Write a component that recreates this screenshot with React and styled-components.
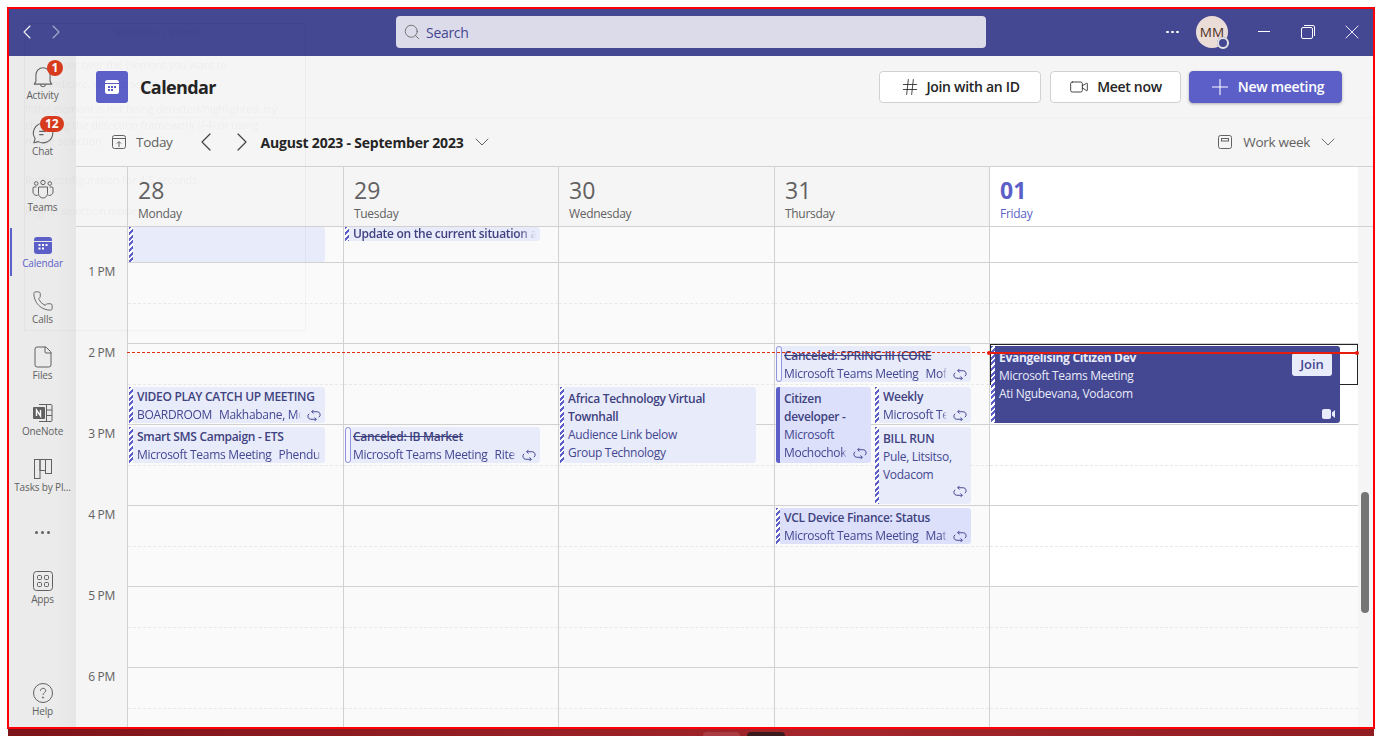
import styled, { createGlobalStyle } from "styled-components";
import { ChevronLeft, ChevronRight, ChevronDown, Search, Plus, Hash, Video, X, Phone, File } from "lucide-react";

const BRAND = "#5b5fc7";
const BRAND_DARK = "#444791";
const COLUMNS = "216px 215px 216px 215px 1fr";

const GlobalStyle = createGlobalStyle`
  html, body {
    margin: 0;
    height: 100%;
    background: #fff;
    overflow: hidden;
  }
  body {
    font-family: "Open Sans", "Liberation Sans", sans-serif;
    letter-spacing: -0.3px;
    color: #242424;
  }
  * { box-sizing: border-box; }
`;

const Page = styled.div`
  width: 1382px;
  height: 736px;
  padding-top: 7px;
`;

const Frame = styled.div`
  position: relative;
  width: 1368px;
  height: 722px;
  margin-left: 7px;
  border: 2px solid #fb0007;
  display: flex;
  flex-direction: column;
  overflow: hidden;
`;

const Wallpaper = styled.div`
  height: 7px;
  margin-left: 8px;
  width: 1366px;
  background: linear-gradient(90deg, #7d1419, #a3262b 60%, #8f1d22);
  display: flex;
  align-items: flex-end;
  gap: 7px;
  padding-left: 695px;
`;

const TrayButton = styled.div`
  width: ${(p) => p.$w}px;
  height: 4px;
  border-radius: 4px 4px 0 0;
  background: ${(p) => p.$bg};
`;

/* title bar */
const TitleBar = styled.header`
  height: 47px;
  flex: none;
  padding-bottom: 1px;
  background: ${BRAND_DARK};
  display: flex;
  align-items: center;
  color: #fff;
  position: relative;
`;

const HistoryNav = styled.div`
  width: 387px;
  padding-left: 9px;
  display: flex;
  gap: 11px;
`;

const NavArrow = styled.span`
  width: 18px;
  height: 18px;
  display: flex;
  align-items: center;
  justify-content: center;
  opacity: ${(p) => (p.$dim ? 0.55 : 0.95)};
  svg { flex: none; }
`;

const SearchBox = styled.div`
  width: 590px;
  height: 32px;
  background: #dcdbe9;
  border-radius: 4px;
  display: flex;
  align-items: center;
  gap: 5px;
  padding-left: 7px;
  font-size: 14px;
  color: ${BRAND_DARK};
  svg { color: #616161; }
`;

const TitleRight = styled.div`
  margin-left: auto;
  margin-right: -1px;
  display: flex;
  align-items: center;
  height: 100%;
`;

const MoreDots = styled.div`
  display: flex;
  gap: 2px;
  margin-right: 17px;
  span {
    width: 3px;
    height: 2px;
    background: #fff;
    border-radius: 1px;
  }
`;

const Avatar = styled.div`
  position: relative;
  width: 32px;
  height: 32px;
  border-radius: 50%;
  background: #eaddd7;
  color: #4f2f26;
  font-size: 13.5px;
  letter-spacing: 0;
  display: flex;
  align-items: center;
  justify-content: center;
  margin-right: 14px;
`;

const StatusBadge = styled.span`
  position: absolute;
  right: -1px;
  bottom: -1px;
  width: 12px;
  height: 12px;
  border-radius: 50%;
  background: ${BRAND_DARK};
  display: flex;
  align-items: center;
  justify-content: center;
  &::after {
    content: "";
    width: 8px;
    height: 8px;
    border-radius: 50%;
    border: 2.5px solid #e4e4e4;
    background: ${BRAND_DARK};
  }
`;

const WindowButton = styled.span`
  width: 44px;
  height: 100%;
  display: flex;
  align-items: center;
  justify-content: center;
`;

/* sidebar */
const Body = styled.div`
  flex: 1;
  display: flex;
  min-height: 0;
`;

const Sidebar = styled.nav`
  width: 67px;
  flex: none;
  background: linear-gradient(90deg, #ebebeb 70%, #e6e6e6);
  display: flex;
  flex-direction: column;
  gap: 8px;
  padding: 4px 0 3px;
`;

const NavItem = styled.div`
  position: relative;
  height: 48px;
  flex: none;
  display: flex;
  flex-direction: column;
  align-items: center;
  padding-top: 6px;
  font-size: 10px;
  letter-spacing: -0.15px;
  line-height: 13px;
  color: ${(p) => (p.$active ? BRAND : "#616161")};
  margin-top: ${(p) => (p.$push ? "auto" : 0)};
  white-space: nowrap;
  &::before {
    content: "";
    display: ${(p) => (p.$active ? "block" : "none")};
    position: absolute;
    left: 1px;
    top: 0;
    bottom: 0;
    width: 2px;
    background: ${BRAND};
  }
`;

const NavIcon = styled.span`
  position: relative;
  height: 22px;
  width: 24px;
  display: flex;
  align-items: center;
  justify-content: center;
  margin-bottom: 1px;
  svg { flex: none; }
`;

const CountBadge = styled.span`
  position: absolute;
  top: -6px;
  left: ${(p) => p.$left}px;
  min-width: 16px;
  height: 16px;
  padding: 0 ${(p) => (p.$pill ? 5 : 3)}px;
  border-radius: 8px;
  background: #d83b1e;
  color: #fff;
  font-size: 12px;
  font-weight: 700;
  letter-spacing: 0;
  line-height: 16px;
  text-align: center;
`;

const OverflowDots = styled.div`
  height: 48px;
  flex: none;
  display: flex;
  align-items: center;
  justify-content: center;
  gap: 3px;
  span {
    width: 3px;
    height: 3px;
    border-radius: 50%;
    background: #616161;
  }
`;

/* main column */
const Main = styled.main`
  flex: 1;
  min-width: 0;
  position: relative;
  background: #f5f5f5;
  display: flex;
  flex-direction: column;
`;

const PageHeader = styled.div`
  height: 62px;
  flex: none;
  display: flex;
  align-items: center;
  padding: 0 31px 0 20px;
  border-bottom: 1px solid #f0f0f0;
`;

const AppTile = styled.div`
  width: 32px;
  height: 32px;
  border-radius: 3px;
  background: ${BRAND};
  display: flex;
  align-items: center;
  justify-content: center;
  margin-right: 12px;
`;

const PageTitle = styled.h1`
  margin: 0;
  font-size: 18px;
  font-weight: 700;
  letter-spacing: -0.6px;
  flex: 1;
`;

const Button = styled.button`
  width: ${(p) => p.$w}px;
  height: 32px;
  margin-left: ${(p) => p.$gap}px;
  border-radius: 4px;
  border: 1px solid ${(p) => (p.$primary ? BRAND : "#d1d1d1")};
  background: ${(p) => (p.$primary ? BRAND : "#fff")};
  color: ${(p) => (p.$primary ? "#fff" : "#242424")};
  box-shadow: ${(p) => (p.$primary ? "0 1px 3px rgba(0,0,0,.3)" : "none")};
  font-family: inherit;
  font-size: 14px;
  font-weight: 600;
  letter-spacing: -0.3px;
  display: flex;
  align-items: center;
  justify-content: center;
  gap: ${(p) => p.$iconGap}px;
  padding: 0;
`;

const Toolbar = styled.div`
  height: 48px;
  flex: none;
  display: flex;
  align-items: center;
  padding: 0 33px 0 35px;
  font-size: 13.5px;
  color: #616161;
  svg { flex: none; }
`;

const ToolbarLabel = styled.span`
  margin-left: ${(p) => p.$ml || 0}px;
  margin-right: ${(p) => p.$mr || 0}px;
`;

const RangeLabel = styled.strong`
  margin: 0 6px 0 9px;
  font-size: 14px;
  font-weight: 700;
  letter-spacing: -0.2px;
  color: #242424;
`;

const ToolbarChevron = styled.span`
  width: 20px;
  height: 20px;
  display: flex;
  align-items: center;
  justify-content: center;
  margin-left: ${(p) => p.$ml || 0}px;
  color: #424242;
`;

const Spacer = styled.div`
  flex: 1;
`;

/* calendar */
const DayHeader = styled.div`
  height: 61px;
  flex: none;
  display: grid;
  grid-template-columns: 51px ${COLUMNS} 15px;
  border-top: 1px solid #d1d1d1;
  border-bottom: 1px solid #d1d1d1;
`;

const DayCell = styled.div`
  border-left: 1px solid #d1d1d1;
  background: ${(p) => (p.$today ? "#fff" : "transparent")};
  color: ${(p) => (p.$today ? BRAND : "#616161")};
  padding: 9px 0 0 10px;
`;

const DayNumber = styled.div`
  font-size: 23px;
  line-height: 29px;
  letter-spacing: 0;
  font-weight: ${(p) => (p.$today ? 700 : 400)};
`;

const DayName = styled.div`
  font-size: 12px;
  line-height: 18px;
`;

const GridBody = styled.div`
  flex: 1;
  position: relative;
  min-height: 0;
  display: grid;
  grid-template-columns: 51px ${COLUMNS} 15px;
  overflow: hidden;
`;

const HourGutter = styled.div`
  padding-top: 37px;
`;

const HourLabel = styled.div`
  height: 81px;
  padding: 0 12px 0 0;
  text-align: right;
  font-size: 12px;
  line-height: 16px;
  color: #616161;
`;

const DayColumn = styled.div`
  position: relative;
  border-left: 1px solid #d1d1d1;
  background: ${(p) => (p.$today ? "linear-gradient(#fff 359px, #fafafa 359px)" : "#fafafa")};
`;

const HourRow = styled.div`
  height: ${(p) => (p.$first ? 36 : 81)}px;
  border-bottom: 1px solid #d1d1d1;
`;

const HalfHour = styled.div`
  height: 41px;
  border-bottom: 1px dashed #e8e8e8;
`;

const Slot = styled.div`
  position: absolute;
  left: 0;
  top: 117px;
  width: 100%;
  height: 41px;
  border: 1px solid #242424;
`;

const Event = styled.div`
  position: absolute;
  left: ${(p) => p.$x}px;
  top: ${(p) => p.$y}px;
  width: ${(p) => p.$w}px;
  height: ${(p) => p.$h}px;
  border-radius: 0 3px 3px 0;
  background: ${(p) => (p.$dark ? BRAND_DARK : p.$strong ? "#dce0fa" : "#e8ebfa")};
  color: ${(p) => (p.$dark ? "#e8ebfa" : BRAND_DARK)};
  padding: ${(p) => (p.$y === 0 ? 0 : p.$h >= 70 ? 3 : 1)}px 4px 0 8px;
  font-size: 12px;
  line-height: ${(p) => (p.$y === 0 ? 14 : 18)}px;
  overflow: hidden;
  &::before {
    content: "";
    position: absolute;
    left: 0;
    top: 0;
    bottom: 0;
    width: 4px;
    ${(p) => p.$bar === "solid" && `background: ${BRAND}; border-radius: 3px 0 0 3px;`}
    ${(p) => p.$bar === "outline" && `background: #f4f5fd; border: 1px solid #8f93e0; border-radius: 3px;`}
    ${(p) =>
      p.$bar === "hatch" &&
      `background: repeating-linear-gradient(135deg, ${BRAND} 0 2px, #fff 2px 4px);`}
  }
`;

const EventTitle = styled.div`
  font-weight: ${(p) => (p.$bold ? 700 : 600)};
  color: ${(p) => (p.$light ? "#e8ebfa" : "#40427f")};
  white-space: ${(p) => (p.$wrap ? "normal" : "nowrap")};
  overflow: hidden;
  text-decoration: ${(p) => (p.$struck ? "line-through" : "none")};
  ${(p) =>
    p.$clip &&
    `-webkit-mask-image: linear-gradient(90deg, #000 calc(100% - 18px), transparent);
     mask-image: linear-gradient(90deg, #000 calc(100% - 18px), transparent);`}
`;

const EventLine = styled.div`
  display: flex;
  white-space: nowrap;
`;

const EventMeta = styled.div`
  flex: 1;
  min-width: 0;
  overflow: hidden;
  -webkit-mask-image: linear-gradient(90deg, #000 calc(100% - 5px), transparent);
  mask-image: linear-gradient(90deg, #000 calc(100% - 5px), transparent);
  span + span { margin-left: 7px; }
`;

const RepeatSlot = styled.span`
  flex: none;
  width: 20px;
  display: flex;
  align-items: center;
  justify-content: flex-end;
  color: ${BRAND_DARK};
  ${(p) => p.$corner && "position: absolute; right: 4px; bottom: 4px; height: 18px;"}
`;

const JoinButton = styled.span`
  position: absolute;
  right: 8px;
  top: 7px;
  width: 40px;
  height: 23px;
  border-radius: 3px;
  background: #e8ebfa;
  color: ${BRAND_DARK};
  font-size: 13px;
  font-weight: 600;
  letter-spacing: 0;
  line-height: 23px;
  text-align: center;
`;

const CameraBadge = styled.span`
  position: absolute;
  right: 5px;
  bottom: 4px;
  display: flex;
`;

const NowDashed = styled.div`
  position: absolute;
  left: 51px;
  top: 125px;
  width: 862px;
  height: 1px;
  background: repeating-linear-gradient(90deg, #e0300f 0 3px, transparent 3px 5px);
`;

const NowSolid = styled.div`
  position: absolute;
  left: 913px;
  top: 125px;
  width: 369px;
  height: 2px;
  background: #e61c0c;
  &::before, &::after {
    content: "";
    position: absolute;
    top: -1px;
    width: 4px;
    height: 4px;
    border-radius: 50%;
    background: #e61c0c;
  }
  &::before { left: -2px; }
  &::after { right: -1px; }
`;

const ScrollThumb = styled.div`
  position: absolute;
  right: 4px;
  top: 265px;
  width: 8px;
  height: 121px;
  border-radius: 4px;
  background: #757575;
`;

/* the half transparent capture window that floats over the app */
const GhostPanel = styled.div`
  position: absolute;
  left: 15px;
  top: 14px;
  width: 282px;
  height: 308px;
  border: 1px solid #000;
  opacity: 0.03;
  color: #000;
  font-size: 11px;
  line-height: 16px;
  letter-spacing: -0.2px;
  pointer-events: none;
`;

const GhostTitle = styled.div`
  margin: 0 0 17px 90px;
`;

const GhostLine = styled.div`
  margin-bottom: ${(p) => p.$mb || 0}px;
  padding-left: ${(p) => p.$indent || 0}px;
  white-space: nowrap;
`;

const BellIcon = () => (
  <svg width="24" height="24" viewBox="0 0 22 22" fill="none" stroke="#616161" strokeWidth="1">
    <path d="M4.5 15V9a6.5 6.5 0 0 1 13 0v6l1.5 2.5H3L4.5 15Z" strokeLinejoin="round" />
    <path d="M8.5 18a2.6 2.6 0 0 0 5 0" />
  </svg>
);

const ChatIcon = () => (
  <svg width="24" height="24" viewBox="0 0 22 22" fill="none" stroke="#616161" strokeWidth="1">
    <path d="M11 2a9 9 0 1 1-4.3 16.9L2.6 20l1.2-3.9A9 9 0 0 1 11 2Z" strokeLinejoin="round" />
    <path d="M7.5 9.5h6M7.5 12.5h4" />
  </svg>
);

const TeamsIcon = () => (
  <svg width="22" height="20" viewBox="0 0 22 20" fill="none" stroke="#616161" strokeWidth="1">
    <circle cx="11" cy="3.5" r="2.2" />
    <circle cx="4.2" cy="4.5" r="1.8" />
    <circle cx="17.8" cy="4.5" r="1.8" />
    <path d="M6.5 8h9v6.5a4.5 4.5 0 0 1-9 0V8Z" />
    <path d="M4.5 8H2a1 1 0 0 0-1 1v4a3.5 3.5 0 0 0 4.7 3.2M17.5 8H20a1 1 0 0 1 1 1v4a3.5 3.5 0 0 1-4.7 3.2" />
  </svg>
);

const CalendarIcon = ({ size = 20, bg = BRAND, dots = "#fff" }) => (
  <svg width={size} height={size} viewBox="0 0 20 20">
    <path d="M1 5a3 3 0 0 1 3-3h12a3 3 0 0 1 3 3v1H1V5Z" fill={bg} />
    <path d="M1 7h18v9a3 3 0 0 1-3 3H4a3 3 0 0 1-3-3V7Z" fill={bg} />
    <g fill={dots}>
      <rect x="5.5" y="9" width="2" height="2" />
      <rect x="9" y="9" width="2" height="2" />
      <rect x="12.5" y="9" width="2" height="2" />
      <rect x="5.5" y="12.5" width="2" height="2" />
      <rect x="9" y="12.5" width="2" height="2" />
    </g>
  </svg>
);

const TileCalendar = () => (
  <svg width="16" height="16" viewBox="0 0 16 16">
    <path d="M1 3.5A2.5 2.5 0 0 1 3.5 1h9A2.5 2.5 0 0 1 15 3.5V4H1v-.5Z" fill="#fff" />
    <path d="M1 5h14v7.5a2.5 2.5 0 0 1-2.5 2.5h-9A2.5 2.5 0 0 1 1 12.5V5Z" fill="#fff" />
    <g fill={BRAND}>
      <rect x="4" y="7" width="2" height="2" />
      <rect x="7" y="7" width="2" height="2" />
      <rect x="10" y="7" width="2" height="2" />
      <rect x="4" y="10" width="2" height="2" />
      <rect x="7" y="10" width="2" height="2" />
    </g>
  </svg>
);

const OneNoteIcon = () => (
  <svg width="22" height="20" viewBox="0 0 22 20" fill="none">
    <path d="M7 1.5h12a1 1 0 0 1 1 1v15a1 1 0 0 1-1 1H7" stroke="#616161" />
    <path d="M14.5 1.5v17M14.5 7H20M14.5 12.5H20" stroke="#616161" />
    <rect x="1" y="4" width="12" height="12" rx="1" fill="#616161" />
    <path d="M4.5 13V7l4 6V7" stroke="#fff" strokeWidth="1.4" />
  </svg>
);

const PlannerIcon = () => (
  <svg width="20" height="22" viewBox="0 0 20 22" fill="none" stroke="#616161">
    <rect x="1.5" y="1.5" width="5.5" height="19" />
    <rect x="7" y="1.5" width="5.5" height="11" />
    <rect x="12.5" y="1.5" width="6" height="14" />
  </svg>
);

const AppsIcon = () => (
  <svg width="20" height="20" viewBox="0 0 20 20" fill="none" stroke="#616161">
    <rect x="0.5" y="0.5" width="19" height="19" rx="3" />
    <rect x="4.5" y="4.5" width="4" height="4" rx="1" />
    <rect x="11.5" y="4.5" width="4" height="4" rx="1" />
    <rect x="4.5" y="11.5" width="4" height="4" rx="1" />
    <rect x="11.5" y="11.5" width="4" height="4" rx="1" />
  </svg>
);

const HelpIcon = () => (
  <svg width="20" height="20" viewBox="0 0 20 20" fill="none" stroke="#616161">
    <circle cx="10" cy="10" r="9.5" />
    <path d="M7.5 7.8c0-3.3 5.2-3.3 5.2-.1 0 2-2.7 2.1-2.7 4.3" />
    <circle cx="10" cy="14.5" r=".6" fill="#616161" />
  </svg>
);

const RepeatIcon = () => (
  <svg width="14" height="13" viewBox="0 0 13 12" fill="none" stroke="currentColor" strokeWidth="0.9">
    <path d="M4.5 2.5h5a2.8 2.8 0 0 1 1.5 5.1M8.5 9.5h-5A2.8 2.8 0 0 1 2 4.4" />
    <path d="M6 .8 4.3 2.5 6 4.2M7 7.8l1.7 1.7L7 11.2" />
  </svg>
);

const TodayIcon = () => (
  <svg width="16" height="16" viewBox="0 0 16 16" fill="none" stroke="#616161">
    <rect x="1.5" y="1.5" width="13" height="13" rx="2" />
    <path d="M1.5 4.5h13M8 13V8M6 9.5l2-2 2 2" />
  </svg>
);

const WeekIcon = () => (
  <svg width="16" height="16" viewBox="0 0 16 16" fill="none" stroke="#616161">
    <rect x="1.5" y="1.5" width="13" height="13" rx="2" />
    <rect x="4.5" y="4.5" width="7" height="2.5" />
  </svg>
);

const RestoreIcon = () => (
  <svg width="16" height="16" viewBox="0 0 16 16" fill="none" stroke="#fff">
    <rect x="1.5" y="3.5" width="11" height="11" rx="1.5" />
    <path d="M4 1.5h9A1.5 1.5 0 0 1 14.500 3v9" />
  </svg>
);

const MinimizeIcon = () => (
  <svg width="14" height="14" viewBox="0 0 14 14" stroke="#fff">
    <path d="M1 6.5h12" />
  </svg>
);

const navItems = [
  { label: "Activity", icon: <BellIcon />, badge: "1", left: 16.5 },
  { label: "Chat", icon: <ChatIcon />, badge: "12", left: 9.5, pill: true },
  { label: "Teams", icon: <TeamsIcon /> },
  { label: "Calendar", icon: <CalendarIcon />, active: true },
  { label: "Calls", icon: <Phone size={22} strokeWidth={1} color="#616161" /> },
  { label: "Files", icon: <File size={24} strokeWidth={1} color="#616161" /> },
  { label: "OneNote", icon: <OneNoteIcon /> },
  { label: "Tasks by Pl...", icon: <PlannerIcon /> },
];

const days = [
  { number: "28", name: "Monday" },
  { number: "29", name: "Tuesday" },
  { number: "30", name: "Wednesday" },
  { number: "31", name: "Thursday" },
  { number: "01", name: "Friday", today: true },
];

const hours = ["1 PM", "2 PM", "3 PM", "4 PM", "5 PM", "6 PM"];

// x/y are relative to the day column, y 0 is the top of the scrolled grid
const events = [
  [
    { x: 1, y: 0, w: 196, h: 35, bar: "hatch" },
    { x: 1, y: 160, w: 196, h: 36, bar: "hatch", title: "VIDEO PLAY CATCH UP MEETING", meta: ["BOARDROOM", "Makhabane, Mo"], repeat: true },
    { x: 1, y: 200, w: 196, h: 36, bar: "hatch", title: "Smart SMS Campaign - ETS", meta: ["Microsoft Teams Meeting", "Phendulile"] },
  ],
  [
    { x: 1, y: 0, w: 195, h: 14, bar: "hatch", title: "Update on the current situation and", clip: true },
    { x: 1, y: 200, w: 195, h: 36, bar: "outline", title: "Canceled: IB Market", struck: true, meta: ["Microsoft Teams Meeting", "Rites"], repeat: true },
  ],
  [
    { x: 1, y: 160, w: 196, h: 76, bar: "hatch", title: "Africa Technology Virtual Townhall", wrap: true, lines: ["Audience Link below", "Group Technology"] },
  ],
  [
    { x: 1, y: 119, w: 195, h: 36, bar: "outline", title: "Canceled: SPRING III (CORE", struck: true, meta: ["Microsoft Teams Meeting", "Mofokeng"], repeat: true },
    { x: 1, y: 160, w: 95, h: 76, bar: "solid", strong: true, title: "Citizen developer -", wrap: true, lines: ["Microsoft"], meta: ["Mochochok"], repeat: true },
    { x: 100, y: 160, w: 96, h: 36, bar: "hatch", title: "Weekly", meta: ["Microsoft Teams"], repeat: true },
    { x: 100, y: 200, w: 96, h: 77, bar: "hatch", title: "BILL RUN", lines: ["Pule, Litsitso,", "Vodacom"], cornerRepeat: true },
    { x: 1, y: 281, w: 195, h: 36, bar: "hatch", strong: true, title: "VCL Device Finance: Status", meta: ["Microsoft Teams Meeting", "Matlala"], repeat: true },
  ],
  [
    { x: 1, y: 119, w: 349, h: 77, bar: "hatch", dark: true, title: "Evangelising Citizen Dev", lines: ["Microsoft Teams Meeting", "Ati Ngubevana, Vodacom"], join: true },
  ],
];

function CalendarEvent({ event }) {
  return (
    <Event $x={event.x} $y={event.y} $w={event.w} $h={event.h} $bar={event.bar} $dark={event.dark} $strong={event.strong}>
      {event.title && (
        <EventTitle $struck={event.struck} $wrap={event.wrap} $light={event.dark} $bold={event.dark} $clip={event.clip}>
          {event.title}
        </EventTitle>
      )}
      {event.lines && event.lines.map((line) => <div key={line}>{line}</div>)}
      {event.meta && (
        <EventLine>
          <EventMeta>
            {event.meta.map((part) => (
              <span key={part}>{part}</span>
            ))}
          </EventMeta>
          {event.repeat && (
            <RepeatSlot>
              <RepeatIcon />
            </RepeatSlot>
          )}
        </EventLine>
      )}
      {event.cornerRepeat && (
        <RepeatSlot $corner>
          <RepeatIcon />
        </RepeatSlot>
      )}
      {event.join && <JoinButton>Join</JoinButton>}
      {event.join && (
        <CameraBadge>
          <svg width="13" height="10" viewBox="0 0 13 10" fill="#e8ebfa">
            <rect x="0" y="0" width="9" height="10" rx="2" />
            <path d="M10 3.5 13 1v8l-3-2.5Z" />
          </svg>
        </CameraBadge>
      )}
    </Event>
  );
}

export default function App() {
  return (
    <Page>
      <GlobalStyle />
      <Frame>
        <TitleBar>
          <HistoryNav>
            <NavArrow>
              <ChevronLeft size={24} strokeWidth={1.1} />
            </NavArrow>
            <NavArrow $dim>
              <ChevronRight size={24} strokeWidth={1.1} />
            </NavArrow>
          </HistoryNav>
          <SearchBox>
            <Search size={18} strokeWidth={1.1} />
            Search
          </SearchBox>
          <TitleRight>
            <MoreDots>
              <span />
              <span />
              <span />
            </MoreDots>
            <Avatar>
              MM
              <StatusBadge />
            </Avatar>
            <WindowButton>
              <MinimizeIcon />
            </WindowButton>
            <WindowButton>
              <RestoreIcon />
            </WindowButton>
            <WindowButton>
              <X size={24} strokeWidth={0.9} />
            </WindowButton>
          </TitleRight>
        </TitleBar>
        <Body>
          <Sidebar>
            {navItems.map((item) => (
              <NavItem key={item.label} $active={item.active}>
                <NavIcon>
                  {item.icon}
                  {item.badge && (
                    <CountBadge $left={item.left} $pill={item.pill}>
                      {item.badge}
                    </CountBadge>
                  )}
                </NavIcon>
                {item.label}
              </NavItem>
            ))}
            <OverflowDots>
              <span />
              <span />
              <span />
            </OverflowDots>
            <NavItem>
              <NavIcon>
                <AppsIcon />
              </NavIcon>
              Apps
            </NavItem>
            <NavItem $push>
              <NavIcon>
                <HelpIcon />
              </NavIcon>
              Help
            </NavItem>
          </Sidebar>
          <Main>
            <PageHeader>
              <AppTile>
                <TileCalendar />
              </AppTile>
              <PageTitle>Calendar</PageTitle>
              <Button $w={162} $iconGap={6}>
                <Hash size={20} strokeWidth={1} />
                Join with an ID
              </Button>
              <Button $w={131} $gap={9} $iconGap={8}>
                <Video size={20} strokeWidth={1} />
                Meet now
              </Button>
              <Button $w={153} $gap={8} $iconGap={5} $primary>
                <Plus size={26} strokeWidth={1} />
                New meeting
              </Button>
            </PageHeader>
            <Toolbar>
              <TodayIcon />
              <ToolbarLabel $ml={9}>Today</ToolbarLabel>
              <ToolbarChevron $ml={23}>
                <ChevronLeft size={32} strokeWidth={0.9} />
              </ToolbarChevron>
              <ToolbarChevron $ml={16}>
                <ChevronRight size={32} strokeWidth={0.9} />
              </ToolbarChevron>
              <RangeLabel>August 2023 - September 2023</RangeLabel>
              <ChevronDown size={24} strokeWidth={1} />
              <Spacer />
              <WeekIcon />
              <ToolbarLabel $ml={10} $mr={6}>
                Work week
              </ToolbarLabel>
              <ChevronDown size={24} strokeWidth={0.9} />
            </Toolbar>
            <DayHeader>
              <div />
              {days.map((day) => (
                <DayCell key={day.number} $today={day.today}>
                  <DayNumber $today={day.today}>{day.number}</DayNumber>
                  <DayName>{day.name}</DayName>
                </DayCell>
              ))}
            </DayHeader>
            <GridBody>
              <HourGutter>
                {hours.map((hour) => (
                  <HourLabel key={hour}>{hour}</HourLabel>
                ))}
              </HourGutter>
              {days.map((day, i) => (
                <DayColumn key={day.number} $today={day.today}>
                  <HourRow $first />
                  {hours.map((hour) => (
                    <HourRow key={hour}>
                      <HalfHour />
                    </HourRow>
                  ))}
                  {day.today && <Slot />}
                  {events[i].map((event, j) => (
                    <CalendarEvent key={j} event={event} />
                  ))}
                </DayColumn>
              ))}
              <NowDashed />
              <NowSolid />
              <ScrollThumb />
            </GridBody>
          </Main>
        </Body>
        <GhostPanel>
          <GhostTitle>Selection Options</GhostTitle>
          <GhostLine $indent={24} $mb={3}>Hover over the element you want to</GhostLine>
          <GhostLine $indent={24} $mb={9}>indicate, click to select it</GhostLine>
          <GhostLine>If the element is not being detected/highlighted, try</GhostLine>
          <GhostLine>changing the detection framework (F4) or using</GhostLine>
          <GhostLine $mb={23}>native selection</GhostLine>
          <GhostLine $mb={15}>Retry configuration for 4.5 seconds</GhostLine>
          <GhostLine>Region selection mode</GhostLine>
        </GhostPanel>
      </Frame>
      <Wallpaper>
        <TrayButton $w={37} $bg="#a93d41" />
        <TrayButton $w={38} $bg="#3b1a1d" />
      </Wallpaper>
    </Page>
  );
}
